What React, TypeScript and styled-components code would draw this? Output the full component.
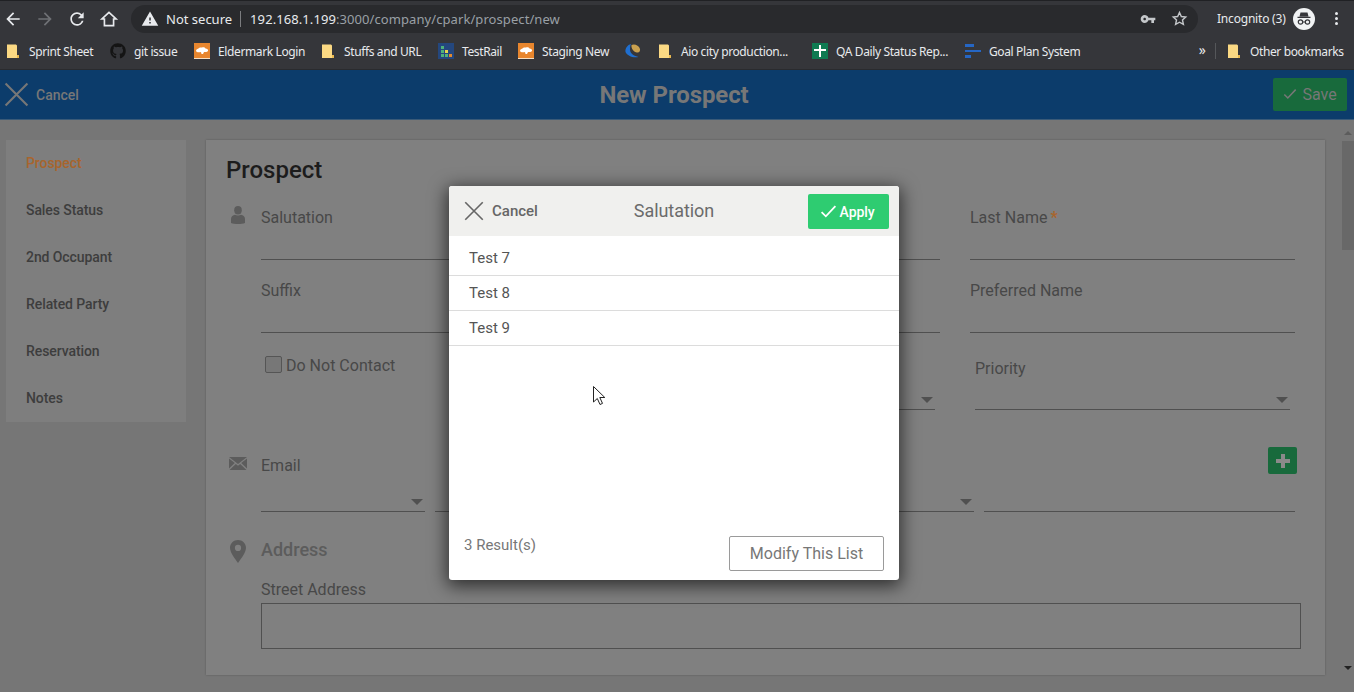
import { FC } from "react";
import styled, { createGlobalStyle } from "styled-components";
import { FaGithub } from "react-icons/fa";

const GlobalStyle = createGlobalStyle`
  html, body {
    margin: 0;
    padding: 0;
    overflow: hidden;
    background: #767676;
  }
  * {
    box-sizing: border-box;
  }
`;

const Screen = styled.div`
  position: relative;
  width: 1354px;
  height: 692px;
  overflow: hidden;
  display: flex;
  flex-direction: column;
  font-family: Roboto, "Liberation Sans", sans-serif;
`;

/* browser chrome */

const Toolbar = styled.div`
  height: 36px;
  flex: none;
  display: flex;
  align-items: center;
  background: #35363a;
  border-top: 1px solid #202124;
  font-family: "Noto Sans", "Liberation Sans", sans-serif;
`;

const NavButton = styled.div`
  width: 32px;
  flex: none;
  display: flex;
  justify-content: center;
  align-items: center;
`;

const NavGroup = styled.div`
  display: flex;
  margin-left: -3px;
`;

const Omnibox = styled.div`
  width: 1067px;
  height: 28px;
  margin-left: 6px;
  padding: 0 10px;
  flex: none;
  display: flex;
  align-items: center;
  background: #292a2d;
  border-radius: 14px;
`;

const NotSecure = styled.span`
  margin-left: 7px;
  font-size: 13px;
  color: #e8eaed;
`;

const Separator = styled.span`
  width: 1px;
  height: 16px;
  margin: 0 9px 0 8px;
  background: #7b7c7f;
`;

const Url = styled.span`
  font-size: 13px;
  color: #9aa0a6;
  letter-spacing: 0.08px;
  b {
    font-weight: 400;
    color: #e8eaed;
  }
`;

const OmniActions = styled.div`
  margin-left: auto;
  display: flex;
  align-items: center;
  gap: 15px;
`;

const Incognito = styled.div`
  margin-left: 19px;
  display: flex;
  align-items: center;
  font-size: 12px;
  color: #e8eaed;
  letter-spacing: -0.2px;
`;

const Avatar = styled.div`
  width: 22px;
  height: 22px;
  margin-left: 7px;
  border-radius: 50%;
  background: #f1f3f4;
  display: flex;
  justify-content: center;
  align-items: center;
`;

const MenuDots = styled.div`
  margin-left: 20px;
  display: flex;
  flex-direction: column;
  gap: 2px;
  span {
    width: 3px;
    height: 3px;
    border-radius: 50%;
    background: #e8eaed;
  }
`;

const BookmarkBar = styled.div`
  height: 34px;
  flex: none;
  padding: 0 0 3px 5px;
  display: flex;
  align-items: center;
  gap: 16px;
  background: #35363a;
  border-bottom: 1px solid #2a2b2e;
  font-family: "Noto Sans", "Liberation Sans", sans-serif;
`;

const Bookmark = styled.div<{ $textWidth: number }>`
  display: flex;
  align-items: center;
  gap: 8px;
  font-size: 12px;
  color: #e8eaed;
  white-space: nowrap;
  span {
    width: ${(p) => p.$textWidth}px;
    letter-spacing: -0.38px;
  }
`;

const BookmarkEnd = styled.div`
  margin-left: auto;
  display: flex;
  align-items: center;
  padding-right: 11px;
`;

const Chevrons = styled.span`
  font-size: 14px;
  line-height: 14px;
  color: #e8eaed;
  margin-top: -3px;
`;

const EndSeparator = styled.span`
  width: 1px;
  height: 16px;
  margin: 0 10px 0 9px;
  background: #55575a;
`;

/* app header */

const AppHeader = styled.header`
  height: 50px;
  flex: none;
  padding: 0 7px 0 4px;
  display: grid;
  grid-template-columns: 1fr auto 1fr;
  align-items: center;
  background: #0c3c6b;
  border-bottom: 1px solid #3a5a78;
`;

const HeaderCancel = styled.div`
  display: flex;
  align-items: center;
  gap: 7px;
  font-size: 14px;
  font-weight: 500;
  color: #777;
`;

const HeaderTitle = styled.h1`
  margin: 0 0 0 -3px;
  font-size: 24px;
  font-weight: 700;
  color: #777;
  letter-spacing: -0.1px;
`;

const SaveButton = styled.div`
  justify-self: end;
  width: 74px;
  height: 33px;
  margin-top: -1px;
  display: flex;
  justify-content: center;
  align-items: center;
  gap: 5px;
  background: #186a3c;
  border-radius: 2px;
  font-size: 16px;
  color: #777;
`;

/* page body, dimmed behind the dialog */

const Body = styled.div`
  flex: 1;
  position: relative;
  padding: 20px 0 17px 6px;
  display: flex;
  align-items: stretch;
  background: #767676;
`;

const SideNav = styled.nav`
  width: 180px;
  height: 282px;
  flex: none;
  background: #7e7e7e;
`;

const SideItem = styled.div<{ $active?: boolean }>`
  height: 47px;
  padding: 0 0 1px 20px;
  display: flex;
  align-items: center;
  font-size: 14px;
  font-weight: 500;
  letter-spacing: -0.08px;
  color: ${(p) => (p.$active ? "#a8652d" : "#3d3d3d")};
`;

const Panel = styled.main`
  width: 1119px;
  margin-left: 20px;
  padding: 15px 20px 0;
  flex: none;
  background: #808080;
  box-shadow: 0 0 2px rgba(0, 0, 0, 0.25);
`;

const PanelTitle = styled.h2`
  margin: 0 0 2px;
  font-size: 24px;
  line-height: 30px;
  font-weight: 500;
  color: #1c1c1c;
`;

const Section = styled.section`
  display: flex;
  align-items: flex-start;
`;

const IconCell = styled.div<{ $top: number }>`
  width: 24px;
  margin: ${(p) => p.$top}px 11px 0 0;
  flex: none;
  display: flex;
  justify-content: center;
`;

const SectionBody = styled.div`
  flex: 1;
  min-width: 0;
`;

const FieldGrid = styled.div`
  display: grid;
  grid-template-columns: 325px 324px 325px;
  column-gap: 30px;
`;

const Field = styled.div`
  height: 73px;
  padding-top: 21px;
  border-bottom: 1px solid #505050;
`;

const Label = styled.div`
  font-size: 16px;
  line-height: 20px;
  color: #484848;
`;

const Required = styled.span`
  margin-left: 3px;
  font-weight: 700;
  color: #a8652d;
`;

const ContactCell = styled.div`
  height: 77px;
  padding: 23px 0 0 4px;
  display: flex;
  align-items: flex-start;
  gap: 4px;
`;

const Checkbox = styled.span`
  width: 17px;
  height: 17px;
  flex: none;
  background: #777;
  border: 1px solid #555;
  border-radius: 2px;
`;

const SelectCell = styled.div`
  position: relative;
  height: 77px;
  margin: 0 5px;
  padding-top: 26px;
  border-bottom: 1px solid #505050;
`;

const Caret = styled.span`
  position: absolute;
  right: 2px;
  bottom: 6px;
  width: 0;
  height: 0;
  border-left: 6px solid transparent;
  border-right: 6px solid transparent;
  border-top: 6px solid #505050;
`;

const EmailHead = styled.div`
  height: 27px;
  margin-top: 37px;
  display: flex;
  justify-content: space-between;
  padding-top: 9px;
`;

const PlusButton = styled.div`
  width: 29px;
  height: 27px;
  margin: -9px 8px 0 0;
  display: flex;
  justify-content: center;
  align-items: center;
  background: #186a3c;
  border-radius: 2px;
`;

const EmailGrid = styled.div`
  display: grid;
  grid-template-columns: 164px 539px 311px;
  column-gap: 10px;
`;

const EmailInput = styled.div`
  position: relative;
  height: 38px;
  border-bottom: 1px solid #505050;
`;

const AddressHeading = styled.h3`
  margin: 26px 0 0;
  font-size: 18px;
  line-height: 24px;
  font-weight: 500;
  color: #5c5c5c;
`;

const StreetLabel = styled(Label)`
  margin-top: 18px;
`;

const StreetBox = styled.div`
  width: 1040px;
  height: 46px;
  margin-top: 3px;
  border: 1px solid #505050;
`;

/* scrollbar */

const ScrollBar = styled.div`
  position: absolute;
  top: 11px;
  right: 0;
  bottom: 17px;
  width: 12px;
  display: flex;
  flex-direction: column;
  align-items: center;
`;

const ScrollThumb = styled.div`
  width: 12px;
  height: 109px;
  margin-top: 6px;
  background: #686868;
`;

const ScrollArrow = styled.span<{ $down?: boolean }>`
  width: 0;
  height: 0;
  margin-top: ${(p) => (p.$down ? "auto" : "0")};
  margin-bottom: ${(p) => (p.$down ? "5px" : "0")};
  border-left: 4px solid transparent;
  border-right: 4px solid transparent;
  border-${(p) => (p.$down ? "top" : "bottom")}: 4px solid
    ${(p) => (p.$down ? "#222" : "#5c5c5c")};
`;

/* dialog */

const Dialog = styled.div`
  position: absolute;
  top: 66px;
  left: 449px;
  width: 450px;
  height: 394px;
  display: flex;
  flex-direction: column;
  background: #fff;
  border-radius: 3px;
  box-shadow: 0 4px 18px 2px rgba(0, 0, 0, 0.65);
`;

const DialogHeader = styled.div`
  height: 50px;
  flex: none;
  padding: 0 10px;
  display: grid;
  grid-template-columns: 1fr auto 1fr;
  align-items: center;
  background: #f0f0ee;
  border-radius: 3px 3px 0 0;
`;

const DialogCancel = styled.div`
  margin-left: 5px;
  display: flex;
  align-items: center;
  gap: 8px;
  font-size: 15px;
  font-weight: 500;
  color: #666;
`;

const DialogTitle = styled.div`
  margin-top: -2px;
  font-size: 18px;
  letter-spacing: -0.05px;
  color: #6b6b6b;
`;

const ApplyButton = styled.div`
  justify-self: end;
  width: 81px;
  height: 35px;
  margin-top: 1px;
  padding-right: 3px;
  display: flex;
  justify-content: center;
  align-items: center;
  gap: 3px;
  background: #2ecc71;
  border-radius: 2px;
  font-size: 14px;
  font-weight: 500;
  letter-spacing: -0.1px;
  color: #fff;
`;

const OptionList = styled.div`
  padding-top: 5px;
`;

const OptionRow = styled.div`
  height: 35px;
  padding-left: 20px;
  display: flex;
  align-items: center;
  border-bottom: 1px solid #dcdcdc;
  font-size: 15px;
  color: #555;
`;

const DialogFooter = styled.div`
  margin-top: auto;
  padding: 0 15px 9px;
  display: flex;
  justify-content: space-between;
  align-items: flex-start;
`;

const ResultCount = styled.div`
  margin-top: -1px;
  font-size: 15px;
  line-height: 20px;
  color: #777;
`;

const ModifyButton = styled.div`
  width: 155px;
  height: 35px;
  display: flex;
  justify-content: center;
  align-items: center;
  border: 1px solid #9a9a9a;
  border-radius: 2px;
  font-size: 16px;
  color: #777;
`;

const Pointer = styled.svg`
  position: absolute;
  top: 200px;
  left: 144px;
`;

/* drawings */

const Folder: FC = () => (
  <svg width="16" height="16" viewBox="0 0 16 16">
    <path d="M2 1.500h9l1 1v9.500h2v3H2z" fill="#fbd983" />
    <path d="M12 12h2v3h-2z" fill="#e9b84f" />
  </svg>
);

const CloudTile: FC = () => (
  <svg width="16" height="16" viewBox="0 0 16 16">
    <rect width="16" height="16" fill="#e8862e" />
    <rect y="15" width="16" height="1" fill="#f7dfc3" />
    <path d="M2 8c0-2 2-2 2.500-2.500C5.500 4 7 4.500 8 4.500c1.500-.5 3 0 3.500 1C13 5.500 14.500 6.500 14 8c-.5 1-2.500 1-4 1L9 11H7.500L7 9C5 9.500 2.500 9.500 2 8z" fill="#fff" />
  </svg>
);

const TestRailIcon: FC = () => (
  <svg width="16" height="16" viewBox="0 0 16 16">
    <rect width="16" height="16" fill="#24477e" />
    <rect x="3" y="3" width="3" height="3" fill="#4fb27a" />
    <rect x="3" y="7" width="3" height="3" fill="#4fb27a" />
    <rect x="3" y="11" width="3" height="3" fill="#4fb27a" />
    <rect x="7" y="7" width="3" height="3" fill="#e5d24f" />
    <rect x="7" y="11" width="3" height="3" fill="#4fb27a" />
    <rect x="11" y="11" width="3" height="3" fill="#e58a2e" />
  </svg>
);

const AioIcon: FC = () => (
  <svg width="16" height="16" viewBox="0 0 16 16">
    <path d="M6 1C2.500 2 0 5 .5 9c2 4 7 6 13 5-4-1-8-3-8.500-7C5 5 5 3 6 1z" fill="#1f6fd0" />
    <path d="M6.500 2C9 .5 14 2 15 6c.5 2-1 4-3 3.500C9 9 6 6 6.500 2z" fill="#c9a04f" />
  </svg>
);

const SheetIcon: FC = () => (
  <svg width="16" height="16" viewBox="0 0 16 16">
    <rect width="16" height="16" fill="#0f7b52" />
    <path d="M7 2h2v4h5v2H9v6H7V8H2V6h5z" fill="#fff" />
  </svg>
);

const GoalIcon: FC = () => (
  <svg width="16" height="16" viewBox="0 0 16 16">
    <rect x="0" y="1" width="9" height="3" fill="#2566c4" />
    <rect x="0" y="7" width="16" height="2" fill="#2566c4" />
    <rect x="0" y="12" width="6" height="3" fill="#2566c4" />
  </svg>
);

const CrossIcon: FC<{ size: number; color: string }> = ({ size, color }) => (
  <svg width={size} height={size} viewBox="0 0 24 24">
    <path d="M1.500 1.500l21 21M22.500 1.500l-21 21" stroke={color} strokeWidth="2" fill="none" />
  </svg>
);

const CheckIcon: FC<{ size: number; color: string }> = ({ size, color }) => (
  <svg width={size} height={size} viewBox="0 0 16 16">
    <path d="M1.500 8.500l4 4 9-9.500" stroke={color} strokeWidth="1.700" fill="none" />
  </svg>
);

const bookmarks = [
  { icon: <Folder />, label: "Sprint Sheet", width: 65 },
  { icon: <FaGithub size={16} color="#141414" />, label: "git issue", width: 44 },
  { icon: <CloudTile />, label: "Eldermark Login", width: 86 },
  { icon: <Folder />, label: "Stuffs and URL", width: 78 },
  { icon: <TestRailIcon />, label: "TestRail", width: 40 },
  { icon: <CloudTile />, label: "Staging New", width: 67 },
  { icon: <AioIcon />, label: "", width: 0 },
  { icon: <Folder />, label: "Aio city production...", width: 115 },
  { icon: <SheetIcon />, label: "QA Daily Status Rep...", width: 113 },
  { icon: <GoalIcon />, label: "Goal Plan System", width: 91 },
];

const sideItems = ["Prospect", "Sales Status", "2nd Occupant", "Related Party", "Reservation", "Notes"];

const App: FC = () => (
  <>
    <GlobalStyle />
    <Screen>
      <Toolbar>
        <NavGroup>
          <NavButton>
            <svg width="20" height="20" viewBox="0 0 24 24" fill="#e8eaed">
              <path d="M20 11H7.830l5.590-5.590L12 4l-8 8 8 8 1.410-1.410L7.830 13H20v-2z" />
            </svg>
          </NavButton>
          <NavButton>
            <svg width="20" height="20" viewBox="0 0 24 24" fill="#6f7175">
              <path d="M4 11h12.170l-5.590-5.590L12 4l8 8-8 8-1.410-1.410L16.170 13H4v-2z" />
            </svg>
          </NavButton>
          <NavButton>
            <svg width="20" height="20" viewBox="0 0 24 24" fill="#e8eaed">
              <path d="M17.650 6.350A7.958 7.958 0 0 0 12 4c-4.420 0-7.990 3.580-7.990 8s3.570 8 7.990 8c3.730 0 6.840-2.550 7.730-6h-2.080A5.990 5.990 0 0 1 12 18c-3.310 0-6-2.690-6-6s2.690-6 6-6c1.660 0 3.140.690 4.220 1.780L13 11h7V4l-2.350 2.350z" />
            </svg>
          </NavButton>
          <NavButton>
            <svg width="20" height="20" viewBox="0 0 24 24">
              <path d="M12 4 3.500 12H6.500v8h11v-8h3z" fill="none" stroke="#e8eaed" strokeWidth="2" />
            </svg>
          </NavButton>
        </NavGroup>
        <Omnibox>
          <svg width="18" height="18" viewBox="0 0 24 24" fill="#e8eaed">
            <path d="M1 21h22L12 2 1 21zm12-3h-2v-2h2v2zm0-4h-2v-4h2v4z" />
          </svg>
          <NotSecure>Not secure</NotSecure>
          <Separator />
          <Url>
            <b>192.168.1.199</b>:3000/company/cpark/prospect/new
          </Url>
          <OmniActions>
            <svg width="16" height="16" viewBox="0 0 24 24" fill="#c4c7ca">
              <path d="M12.650 10C11.830 7.670 9.610 6 7 6c-3.310 0-6 2.690-6 6s2.690 6 6 6c2.610 0 4.830-1.670 5.650-4H17v4h4v-4h2v-4H12.650zM7 14c-1.100 0-2-.900-2-2s.900-2 2-2 2 .900 2 2-.900 2-2 2z" />
            </svg>
            <svg width="17" height="17" viewBox="0 0 24 24" fill="none" stroke="#c4c7ca" strokeWidth="2">
              <path d="M12 3.500l2.600 5.700 6.200.7-4.600 4.200 1.300 6.100L12 17.200l-5.500 3 1.300-6.100-4.600-4.200 6.200-.7z" />
            </svg>
          </OmniActions>
        </Omnibox>
        <Incognito>
          Incognito (3)
          <Avatar>
            <svg width="18" height="18" viewBox="0 0 18 18" fill="#35363a">
              <path d="M5.500 2.500h7l1 4h-9zM2.500 6.800h13v1.200h-13z" />
              <circle cx="5.500" cy="12" r="2.200" fill="none" stroke="#35363a" strokeWidth="1.200" />
              <circle cx="12.500" cy="12" r="2.200" fill="none" stroke="#35363a" strokeWidth="1.200" />
              <path d="M7.500 11.500h3v1h-3z" />
            </svg>
          </Avatar>
          <MenuDots>
            <span />
            <span />
            <span />
          </MenuDots>
        </Incognito>
      </Toolbar>

      <BookmarkBar>
        {bookmarks.map((b) => (
          <Bookmark key={b.label + b.width} $textWidth={b.width}>
            {b.icon}
            {b.label && <span>{b.label}</span>}
          </Bookmark>
        ))}
        <BookmarkEnd>
          <Chevrons>»</Chevrons>
          <EndSeparator />
          <Bookmark $textWidth={93}>
            <Folder />
            <span>Other bookmarks</span>
          </Bookmark>
        </BookmarkEnd>
      </BookmarkBar>

      <AppHeader>
        <HeaderCancel>
          <CrossIcon size={25} color="#777" />
          Cancel
        </HeaderCancel>
        <HeaderTitle>New Prospect</HeaderTitle>
        <SaveButton>
          <CheckIcon size={14} color="#777" />
          Save
        </SaveButton>
      </AppHeader>

      <Body>
        <SideNav>
          {sideItems.map((item, i) => (
            <SideItem key={item} $active={i === 0}>
              {item}
            </SideItem>
          ))}
        </SideNav>

        <Panel>
          <PanelTitle>Prospect</PanelTitle>
          <Section>
            <IconCell $top={19}>
              <svg width="14" height="18" viewBox="0 0 14 18" fill="#5c5c5c">
                <ellipse cx="7" cy="4.200" rx="3.800" ry="4.200" />
                <path d="M0 17v-4c0-2.500 2-3.800 4-4.200 1.800 1 4.200 1 6 0 2 .4 4 1.700 4 4.200v4c-3 1.300-11 1.300-14 0z" />
              </svg>
            </IconCell>
            <SectionBody>
              <FieldGrid>
                <Field>
                  <Label>Salutation</Label>
                </Field>
                <Field />
                <Field>
                  <Label>
                    Last Name<Required>*</Required>
                  </Label>
                </Field>
                <Field>
                  <Label>Suffix</Label>
                </Field>
                <Field />
                <Field>
                  <Label>Preferred Name</Label>
                </Field>
                <ContactCell>
                  <Checkbox />
                  <Label>Do Not Contact</Label>
                </ContactCell>
                <SelectCell>
                  <Caret />
                </SelectCell>
                <SelectCell>
                  <Label>Priority</Label>
                  <Caret />
                </SelectCell>
              </FieldGrid>
            </SectionBody>
          </Section>

          <Section>
            <IconCell $top={47}>
              <svg width="18" height="13" viewBox="0 0 18 13" fill="#5c5c5c">
                <path d="M0 0h18L9 7zM0 1.500v10L5.800 6zM18 1.500v10L12.200 6zM.5 13l6.300-6L9 8.700 11.200 7l6.300 6z" />
              </svg>
            </IconCell>
            <SectionBody>
              <EmailHead>
                <Label>Email</Label>
                <PlusButton>
                  <svg width="14" height="14" viewBox="0 0 14 14" fill="#8a8a8a">
                    <path d="M5 0h4v5h5v4H9v5H5V9H0V5h5z" />
                  </svg>
                </PlusButton>
              </EmailHead>
              <EmailGrid>
                <EmailInput>
                  <Caret />
                </EmailInput>
                <EmailInput>
                  <Caret />
                </EmailInput>
                <EmailInput />
              </EmailGrid>
            </SectionBody>
          </Section>

          <Section>
            <IconCell $top={28}>
              <svg width="16" height="23" viewBox="0 0 16 23" fill="#5c5c5c">
                <path
                  fillRule="evenodd"
                  d="M8 0c4.500 0 8 3.400 8 7.800 0 4.600-4.800 10.700-8 15.200C4.800 18.500 0 12.400 0 7.800 0 3.400 3.500 0 8 0zm0 4.800a3.100 3.100 0 1 0 0 6.200 3.100 3.100 0 0 0 0-6.200z"
                />
              </svg>
            </IconCell>
            <SectionBody>
              <AddressHeading>Address</AddressHeading>
              <StreetLabel>Street Address</StreetLabel>
              <StreetBox />
            </SectionBody>
          </Section>
        </Panel>

        <ScrollBar>
          <ScrollArrow />
          <ScrollThumb />
          <ScrollArrow $down />
        </ScrollBar>

        <Dialog>
          <DialogHeader>
            <DialogCancel>
              <CrossIcon size={20} color="#666" />
              Cancel
            </DialogCancel>
            <DialogTitle>Salutation</DialogTitle>
            <ApplyButton>
              <CheckIcon size={17} color="#fff" />
              Apply
            </ApplyButton>
          </DialogHeader>
          <OptionList>
            <OptionRow>Test 7</OptionRow>
            <OptionRow>Test 8</OptionRow>
            <OptionRow>Test 9</OptionRow>
          </OptionList>
          <DialogFooter>
            <ResultCount>3 Result(s)</ResultCount>
            <ModifyButton>Modify This List</ModifyButton>
          </DialogFooter>
          <Pointer width="14" height="20" viewBox="0 0 14 20">
            <path d="M.5.500v15.500l3.800-3.500 2.700 6 2.500-1.100-2.700-5.900h5z" fill="#fff" stroke="#222" strokeWidth="1" />
          </Pointer>
        </Dialog>
      </Body>
    </Screen>
  </>
);

export default App;
